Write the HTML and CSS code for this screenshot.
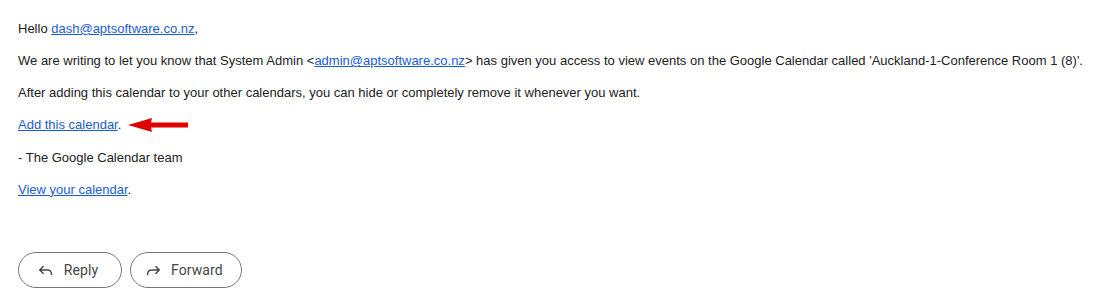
FILE: index.html
```html
<!DOCTYPE html>
<html lang="en">
<head>
    <meta charset="UTF-8">
    <title>Calendar shared with you</title>
    <link rel="stylesheet" href="styles.css">
</head>
<body>
    <div class="message">
        <div class="message-body">
            <p>Hello <a href="#">dash@aptsoftware.co.nz</a>,</p>
            <p>We are writing to let you know that System Admin &lt;<a href="#">admin@aptsoftware.co.nz</a>&gt; has given you access to view events on the Google Calendar called 'Auckland-1-Conference Room 1 (8)'.</p>
            <p>After adding this calendar to your other calendars, you can hide or completely remove it whenever you want.</p>
            <p class="add-row">
                <span><a href="#">Add this calendar</a>.</span>
                <!-- red arrow annotation -->
                <svg class="arrow" width="62" height="16" viewBox="0 0 62 16">
                    <polygon points="0,8 24,1 23,5.5 60,5.5 60,10.5 23,10.5 24,15" fill="#e00000"/>
                </svg>
            </p>
            <p>- The Google Calendar team</p>
            <p><a href="#">View your calendar</a>.</p>
        </div>
        <div class="actions">
            <button class="pill">
                <svg width="20" height="20" viewBox="0 0 24 24"><path d="M9 7.5 4.5 12 9 16.5M5 12h9a4.5 4.5 0 0 1 4.5 4.5V18" fill="none" stroke="#444746" stroke-width="1.7"/></svg>
                Reply
            </button>
            <button class="pill">
                <svg width="20" height="20" viewBox="0 0 24 24"><path d="M15 7.5l4.5 4.5-4.5 4.5M19 12h-9a4.5 4.5 0 0 0-4.5 4.5V18" fill="none" stroke="#444746" stroke-width="1.7"/></svg>
                Forward
            </button>
        </div>
    </div>
</body>
</html>
```

FILE: styles.css
```css
body {
    margin: 0;
    background: #fff;
    font-family: "Liberation Sans", Arial, sans-serif;
}
.message {
    padding: 12px 0 0 18px;
}
.message-body {
    font-size: 13px;
    color: #222;
    white-space: nowrap;
}
.message-body p {
    margin: 0;
    height: 32.2px;
    line-height: 34px;
}
.message-body a {
    color: #1a5bd6;
    text-decoration: underline;
}
.add-row {
    display: flex;
    align-items: center;
}
.arrow {
    margin-left: 7px;
}
.actions {
    display: flex;
    gap: 8px;
    margin-top: 47px;
}
.pill {
    display: flex;
    align-items: center;
    justify-content: center;
    gap: 8px;
    box-sizing: border-box;
    min-width: 104px;
    height: 36px;
    padding: 0 18px 0 12px;
    border: 1px solid #747775;
    border-radius: 18px;
    background: #fff;
    color: #444746;
    font-family: Roboto, "Noto Sans", sans-serif;
    font-size: 14px;
    font-weight: 400;
    letter-spacing: 0.1px;
}
```
